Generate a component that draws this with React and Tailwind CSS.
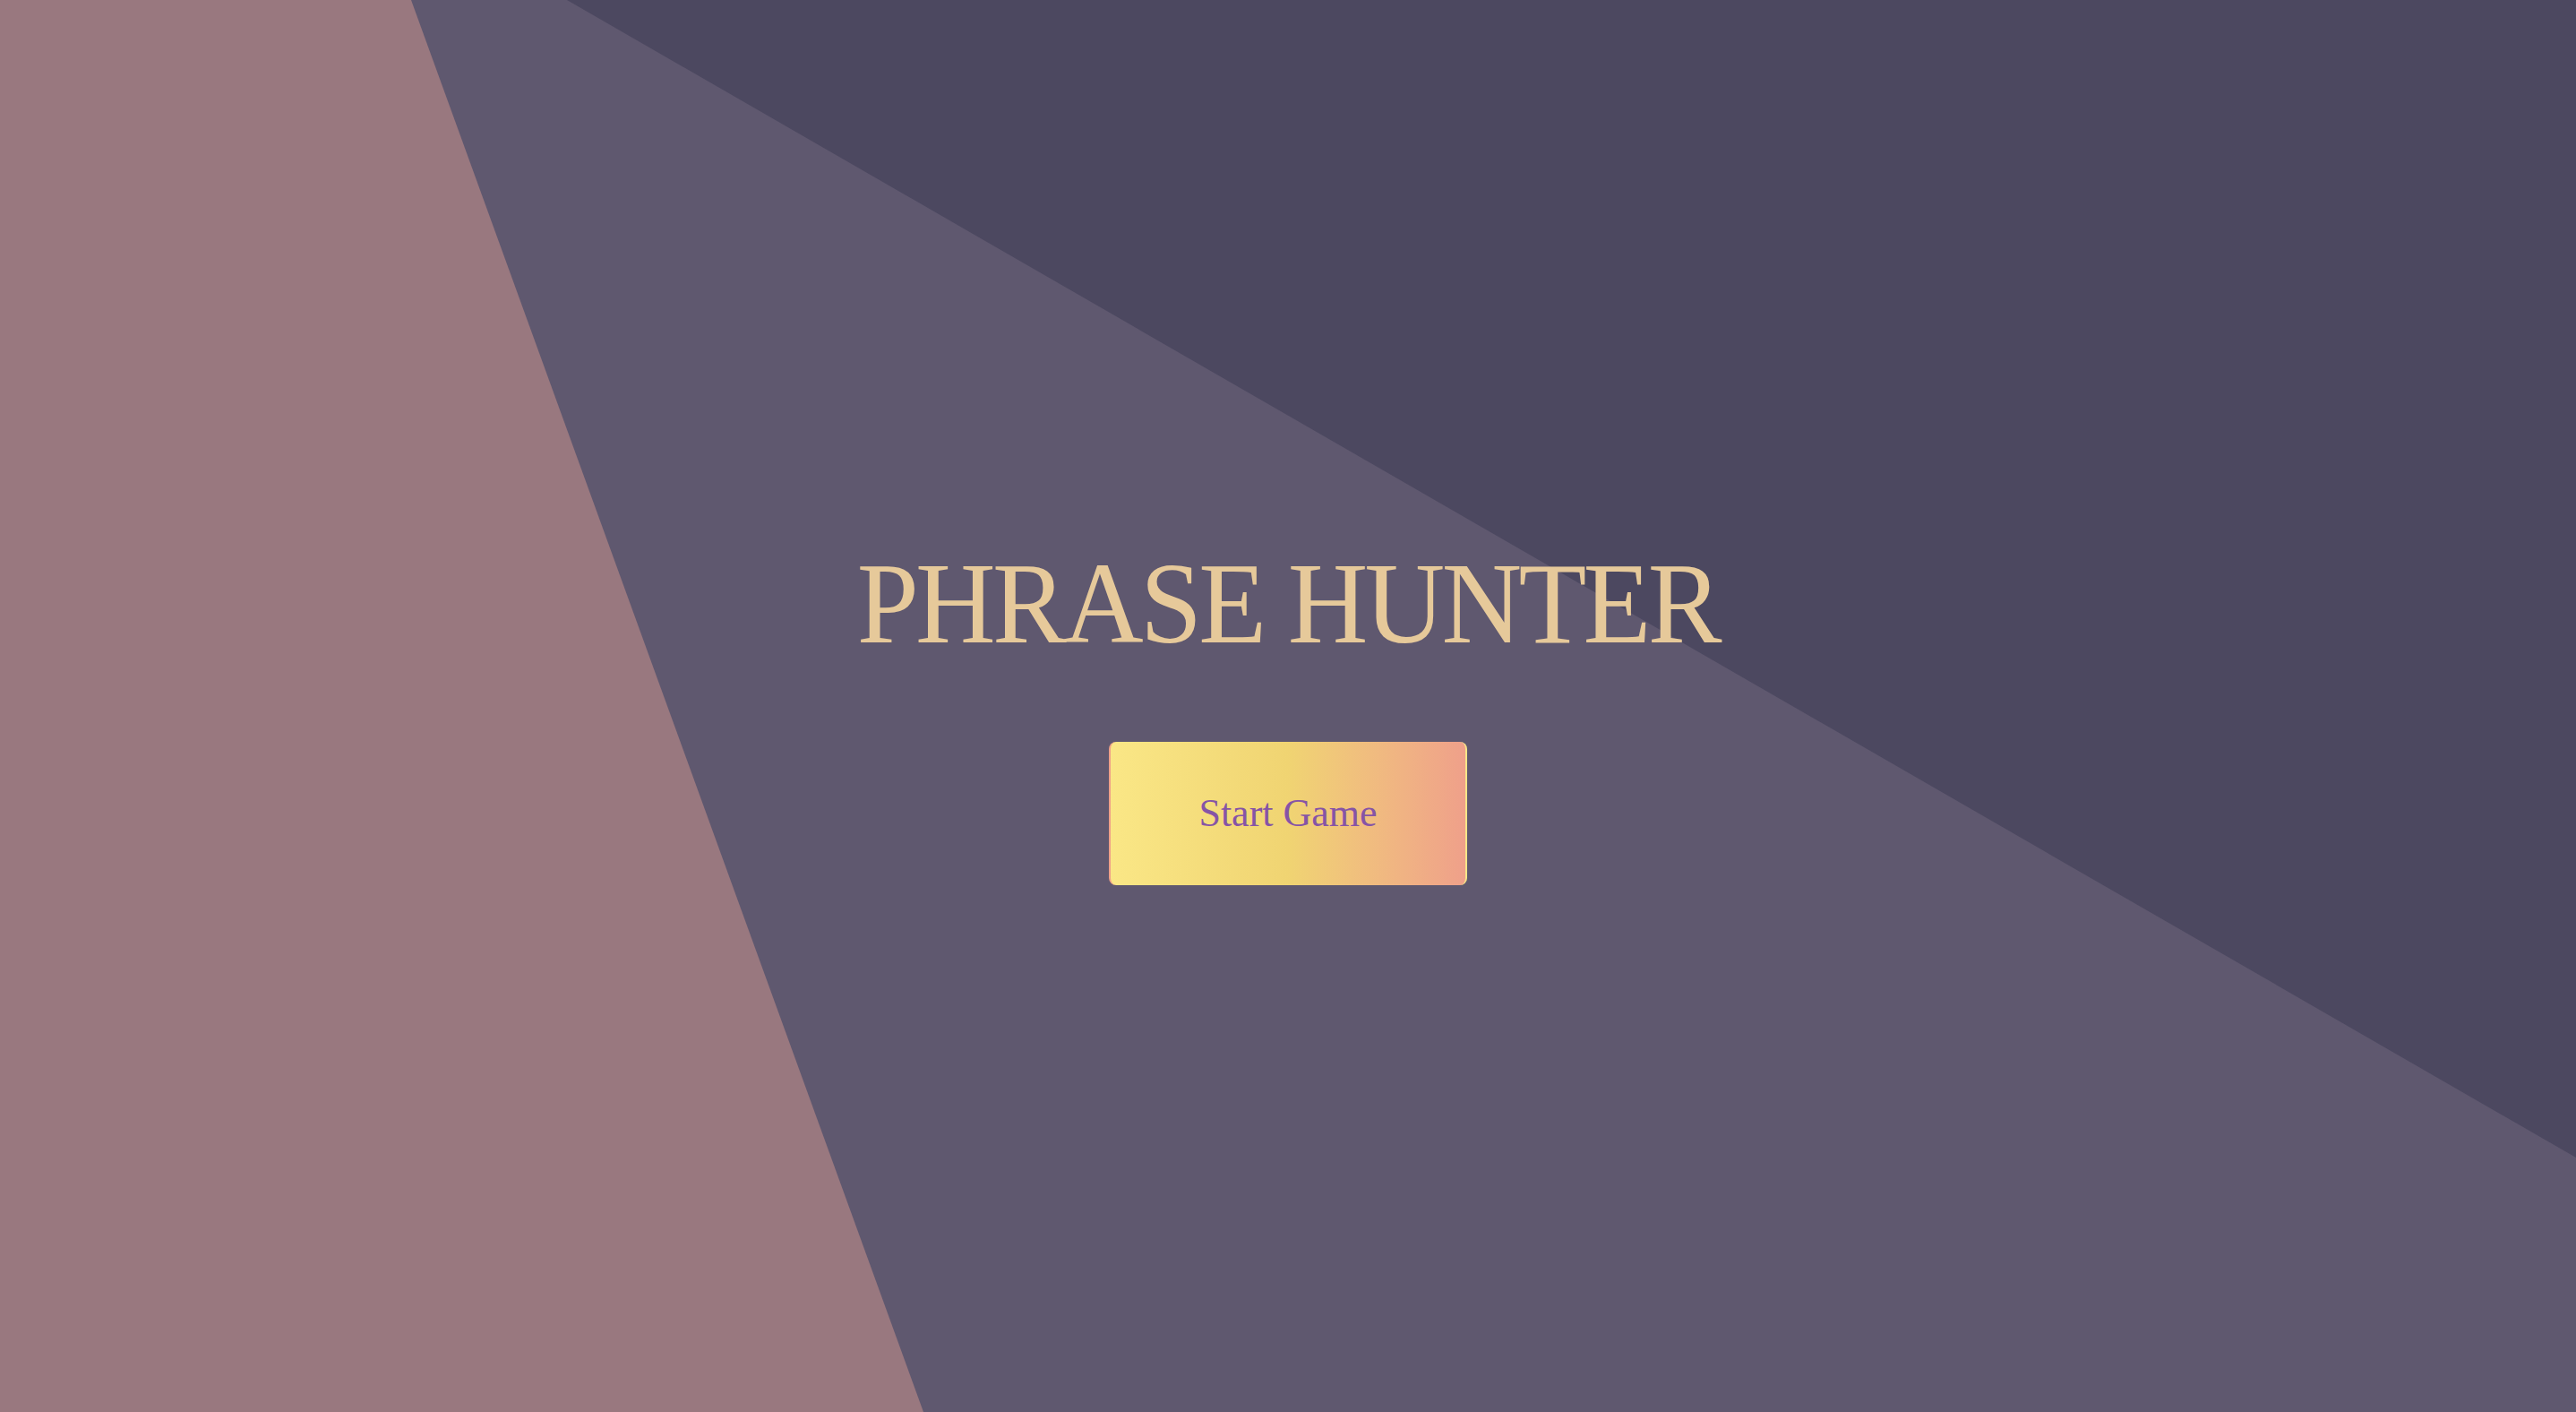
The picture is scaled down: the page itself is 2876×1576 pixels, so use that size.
import React from "react";

function Backdrop() {
  return (
    <svg
      className="absolute inset-0 w-full h-full"
      viewBox="0 0 2876 1576"
      preserveAspectRatio="none"
    >
      <rect width="2876" height="1576" fill="#5f586f" />
      <polygon points="633,0 2876,0 2876,1292" fill="#4c4860" />
      <polygon points="0,0 459,0 1031,1576 0,1576" fill="#99787f" />
    </svg>
  );
}

export default function App() {
  return (
    <div className="relative h-screen w-full overflow-hidden bg-[#5f586f]">
      <Backdrop />

      <main className="relative z-10 flex h-full flex-col items-center justify-center pt-[20px]">
        <h1 className="scale-x-[0.955] text-[130px] leading-none tracking-[-0.03em] text-[#e6c99a] font-['Liberation_Serif',serif]">
          PHRASE HUNTER
        </h1>

        <button className="mt-[90px] flex h-[160px] w-[400px] items-center justify-center rounded-lg border-l-2 border-r-2 border-l-[#efa088] border-r-[#f9e688] bg-gradient-to-r from-[#fae786] via-[#f0d472] to-[#efa08a] text-[44px] text-[#8654a6] font-['Liberation_Serif',serif]">
          Start Game
        </button>
      </main>
    </div>
  );
}
